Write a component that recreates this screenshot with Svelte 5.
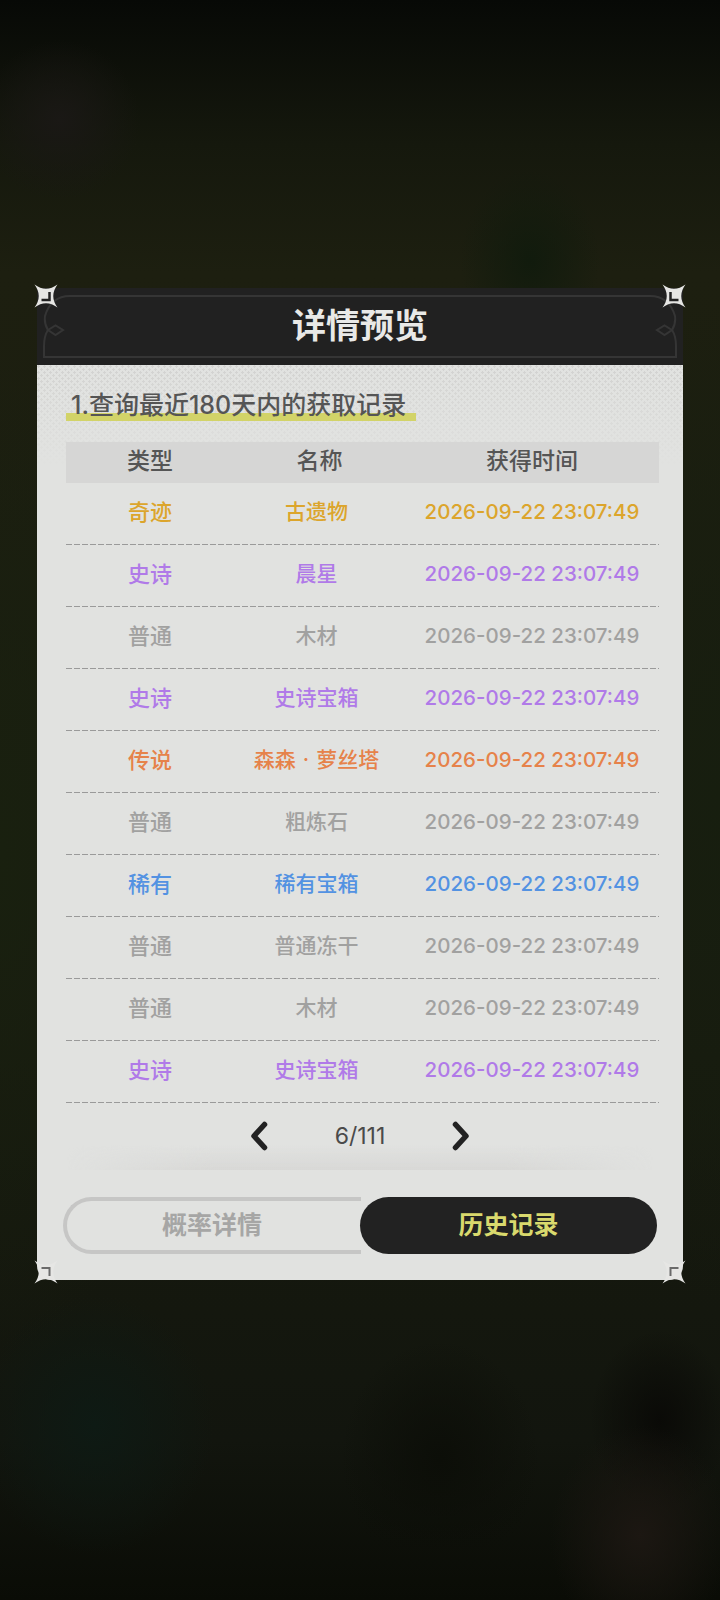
<script>
  const rarity = {
    miracle: { label: '奇迹', color: '#dca52c' },
    epic: { label: '史诗', color: '#b07ae8' },
    common: { label: '普通', color: '#a1a1a0' },
    legend: { label: '传说', color: '#e6824a' },
    rare: { label: '稀有', color: '#5392e2' }
  };

  const records = [
    { type: 'miracle', name: '古遗物' },
    { type: 'epic', name: '晨星' },
    { type: 'common', name: '木材' },
    { type: 'epic', name: '史诗宝箱' },
    { type: 'legend', name: '森森 · 萝丝塔' },
    { type: 'common', name: '粗炼石' },
    { type: 'rare', name: '稀有宝箱' },
    { type: 'common', name: '普通冻干' },
    { type: 'common', name: '木材' },
    { type: 'epic', name: '史诗宝箱' }
  ];

  const time = '2026-09-22 23:07:49';
  const corners = ['tl', 'tr', 'bl', 'br'];
</script>

<div class="page">
  <div class="panel">
    <header class="panel-head">
      <svg class="head-frame" viewBox="0 0 646 77" aria-hidden="true">
        <g>
          <path d="M323 8H33Q14 8 8 28Q7 36 11 42Q7 48 7 58V69H323" />
          <path d="M11 42L18.5 37.5L26 42L18.5 47Z" />
        </g>
        <g transform="translate(646 0) scale(-1 1)">
          <path d="M323 8H33Q14 8 8 28Q7 36 11 42Q7 48 7 58V69H323" />
          <path d="M11 42L18.5 37.5L26 42L18.5 47Z" />
        </g>
      </svg>
      <h1>详情预览</h1>
    </header>

    <div class="panel-body">
      <div class="texture"></div>
      <h2><span>1.查询最近180天内的获取记录</span></h2>

      <div class="row table-head">
        <div>类型</div>
        <div>名称</div>
        <div>获得时间</div>
      </div>

      {#each records as rec}
        <div class="row" style="color: {rarity[rec.type].color}">
          <div>{rarity[rec.type].label}</div>
          <div class="name">{rec.name}</div>
          <div class="time">{time}</div>
        </div>
      {/each}

      <div class="fade"></div>
      <div class="pager">
        <svg viewBox="0 0 18 30" class="arrow" aria-hidden="true"><path d="M14.5 3.5L4 15L14.5 26.5" /></svg>
        <span>6/111</span>
        <svg viewBox="0 0 18 30" class="arrow" aria-hidden="true"><path d="M3.5 3.5L14 15L3.5 26.5" /></svg>
      </div>

      <div class="tabs">
        <div class="tab">概率详情</div>
        <div class="tab active">历史记录</div>
      </div>
    </div>

    {#each corners as c}
      <svg class="corner {c}" viewBox="0 0 24 24" aria-hidden="true">
        <path class="star" d="M0.5 0.5Q12 9 23.5 0.5Q15 12 23.5 23.5Q12 15 0.5 23.5Q9 12 0.5 0.5Z" />
        <path class="tick" d="M15.5 8V16H7.5" />
      </svg>
    {/each}
  </div>
</div>

<style>
  :global(body) {
    margin: 0;
    background: #0b0d08;
  }

  .page {
    box-sizing: border-box;
    width: 720px;
    height: 1600px;
    padding: 288px 37px 0;
    font-family: Inter, "Noto Sans CJK SC", sans-serif;
    background:
      radial-gradient(ellipse 90px 110px at 640px 1535px, #1c1712 0%, transparent 100%),
      radial-gradient(ellipse 70px 90px at 660px 1420px, #0a0a07 0%, transparent 100%),
      radial-gradient(ellipse 120px 130px at 95px 1425px, #0e1a14 0%, transparent 100%),
      radial-gradient(ellipse 100px 120px at 440px 1460px, #0c0e08 0%, transparent 100%),
      radial-gradient(ellipse 200px 500px at 0px 850px, #19200f 0%, transparent 100%),
      radial-gradient(ellipse 200px 500px at 720px 800px, #171e0f 0%, transparent 100%),
      radial-gradient(ellipse 70px 90px at 530px 260px, #111b0d 0%, transparent 100%),
      radial-gradient(ellipse 80px 80px at 60px 120px, #1a1815 0%, transparent 100%),
      linear-gradient(#070906 0%, #15180d 9%, #1d1f10 17%, #1a1d10 50%, #14170e 82%, #12150e 90%, #0a0c06 100%);
  }

  .panel {
    position: relative;
    width: 646px;
    height: 992px;
    display: flex;
    flex-direction: column;
  }

  .panel-head {
    position: relative;
    height: 77px;
    flex: none;
    background: #212121;
    display: flex;
    align-items: center;
    justify-content: center;
  }

  .head-frame {
    position: absolute;
    inset: 0;
    width: 100%;
    height: 100%;
    fill: none;
    stroke: #353535;
    stroke-width: 2;
  }

  h1 {
    position: relative;
    margin: 0 0 2px;
    font-size: 34px;
    font-weight: 700;
    line-height: 1;
    color: #e9e9e7;
  }

  .panel-body {
    position: relative;
    flex: 1;
    box-sizing: border-box;
    padding: 0 24px 0 29px;
    background: #e1e2e0;
    border-radius: 0 0 14px 14px;
  }

  .texture {
    position: absolute;
    inset: 0 0 auto 0;
    height: 100px;
    background-image:
      radial-gradient(circle at 1.5px 1.5px, #d2d2d0 1.2px, transparent 1.4px),
      radial-gradient(circle at 4.5px 4.5px, #d2d2d0 1.2px, transparent 1.4px);
    background-size: 6px 6px;
    mask-image: linear-gradient(#000 0%, transparent 100%);
  }

  h2 {
    position: relative;
    margin: 0;
    height: 77px;
    font-size: 25px;
    font-weight: 500;
    line-height: 1;
    color: #555555;
    display: flex;
    align-items: flex-start;
  }

  h2 span {
    margin-top: 28px;
    padding: 0 10px 0 5px;
    height: 28px;
    line-height: 24px;
    background: linear-gradient(transparent 20px, #d2d368 20px, #d2d368 28px);
    white-space: nowrap;
  }

  .row {
    position: relative;
    display: grid;
    grid-template-columns: 168px 171px 254px;
    align-items: center;
    height: 62px;
    box-sizing: border-box;
    font-size: 22px;
    font-weight: 500;
    text-align: center;
    padding-bottom: 8px;
    background-image: repeating-linear-gradient(90deg, #9a9a9a 0 6px, transparent 6px 8px);
    background-size: 100% 1.5px;
    background-repeat: no-repeat;
    background-position: left bottom;
  }

  .table-head {
    height: 41px;
    padding: 0 0 7px;
    font-size: 23px;
    color: #555555;
    background: #d6d6d5;
  }

  .name {
    font-size: 21px;
    padding-right: 6px;
    word-spacing: 1.5px;
  }

  .time {
    font-size: 20.5px;
    margin-top: 2px;
  }

  .pager {
    position: relative;
    height: 66px;
    box-sizing: border-box;
    padding-right: 5px;
    display: flex;
    align-items: center;
    justify-content: center;
    gap: 67px;
    font-size: 23px;
    color: #4a4a4a;
  }

  .arrow {
    width: 18px;
    height: 30px;
    fill: none;
    stroke: #222222;
    stroke-width: 5.5;
    stroke-linecap: round;
    stroke-linejoin: round;
  }

  .fade {
    position: absolute;
    left: 30px;
    right: 30px;
    top: 780px;
    height: 25px;
    background: linear-gradient(transparent, #d8d8d6);
    mask-image: linear-gradient(90deg, transparent, #000 25%, #000 75%, transparent);
  }

  .tabs {
    position: absolute;
    left: 26px;
    top: 832px;
    width: 594px;
    height: 57px;
    display: flex;
  }

  .tab {
    flex: 1;
    display: flex;
    align-items: center;
    justify-content: center;
    font-size: 25px;
    font-weight: 700;
    padding: 0 4px 6px 0;
    color: #a6a6a5;
    box-sizing: border-box;
    border: 4px solid #c6c6c5;
    border-right: 0;
    border-radius: 29px 0 0 29px;
  }

  .tab.active {
    flex: none;
    width: 297px;
    margin-left: -1px;
    padding: 0 0 6px;
    color: #d9d96d;
    background: #222222;
    border: 0;
    border-radius: 29px;
  }

  .corner {
    position: absolute;
    width: 24px;
    height: 24px;
  }

  .corner .star {
    fill: #e6e6e4;
  }

  .corner .tick {
    fill: none;
    stroke: #222222;
    stroke-width: 2.5;
  }

  .corner.tl { left: -3px; top: -4px; }
  .corner.tr { right: -3px; top: -4px; transform: scaleX(-1); }
  .corner.bl { left: -3px; bottom: -4px; transform: scaleY(-1); }
  .corner.br { right: -3px; bottom: -4px; transform: scale(-1); }

  .corner.bl .tick,
  .corner.br .tick {
    stroke: #6a6a6a;
    stroke-width: 2;
  }
</style>
